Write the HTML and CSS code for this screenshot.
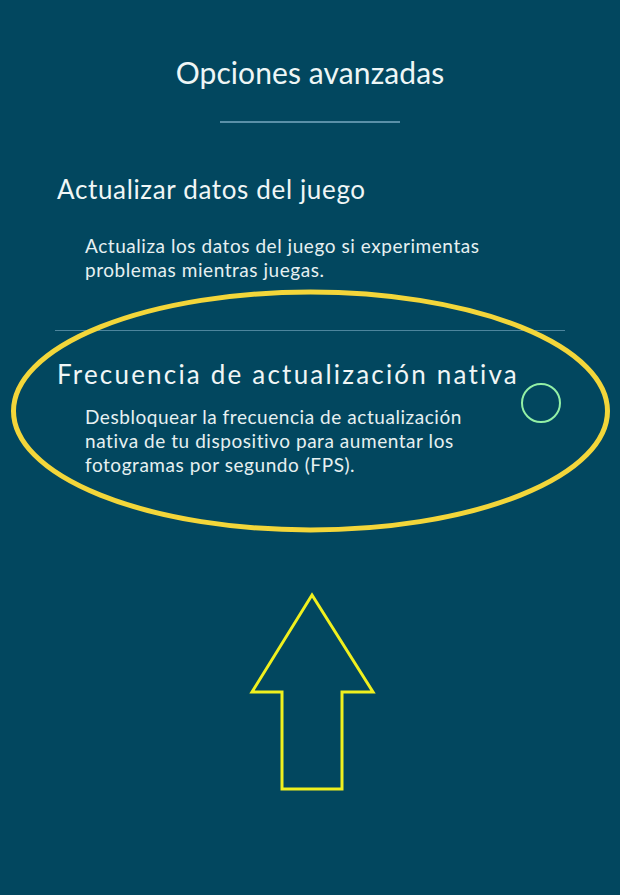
FILE: index.html
```html
<!DOCTYPE html>
<html lang="es">
<head>
<meta charset="utf-8">
<title>Opciones avanzadas</title>
<link rel="stylesheet" href="styles.css">
</head>
<body>
<main class="page">
  <h1 class="title">Opciones avanzadas</h1>
  <div class="title-rule"></div>

  <section class="option option-first">
    <h2 class="option-heading">Actualizar datos del juego</h2>
    <p class="option-desc">Actualiza los datos del juego si experimentas problemas mientras juegas.</p>
  </section>

  <div class="section-rule"></div>

  <section class="option option-toggle">
    <h2 class="option-heading spaced">Frecuencia de actualización nativa</h2>
    <span class="toggle" aria-hidden="true"></span>
    <p class="option-desc narrow">Desbloquear la frecuencia de actualización nativa de tu dispositivo para aumentar los fotogramas por segundo (FPS).</p>
  </section>

  <svg class="annotations" width="620" height="895" viewBox="0 0 620 895" aria-hidden="true">
    <ellipse cx="310.5" cy="411" rx="297" ry="119" fill="none" stroke="#f3d63a" stroke-width="5"/>
    <polygon points="312,595 373,692 342,692 342,789 282,789 282,692 252,692" fill="none" stroke="#f0f01e" stroke-width="3" stroke-linejoin="miter"/>
  </svg>
</main>
</body>
</html>
```

FILE: styles.css
```css
html, body {
  margin: 0;
  padding: 0;
}

body {
  background: #02475f;
  color: #eef6f5;
  font-family: Lato, "Open Sans", "Liberation Sans", sans-serif;
}

.page {
  position: relative;
  width: 620px;
  height: 895px;
  padding-top: 54px;
  box-sizing: border-box;
  overflow: hidden;
}

.title {
  margin: 0;
  font-size: 30px;
  line-height: 36px;
  font-weight: 400;
  text-align: center;
  letter-spacing: 0.1px;
  color: #eef6f6;
}

.title-rule {
  width: 180px;
  height: 2px;
  margin: 31px auto 0;
  background: #5a90a8;
}

.option {
  padding: 0 55px 0 57px;
}

.option-first {
  margin-top: 51px;
}

.option-heading {
  margin: 0;
  font-size: 26px;
  line-height: 30px;
  font-weight: 400;
  letter-spacing: 0.65px;
  color: #f0f6f6;
}

.option-heading.spaced {
  letter-spacing: 2.2px;
  white-space: nowrap;
}

.option-desc {
  max-width: 415px;
  margin: 30px 0 0 28px;
  font-size: 19px;
  line-height: 24px;
  letter-spacing: 0.55px;
  color: #e6f0f1;
}

.section-rule {
  height: 1px;
  margin: 48px 55px 0 55px;
  background: #4d859d;
}

.option-toggle {
  display: grid;
  grid-template-columns: 1fr auto;
  margin-top: 28px;
  padding-right: 0;
}

.option-toggle .option-heading {
  grid-column: 1 / 3;
  grid-row: 1;
}

.toggle {
  grid-column: 2;
  grid-row: 1 / 3;
  align-self: start;
  width: 36px;
  height: 36px;
  margin: 24px 59px 0 0;
  border: 2px solid #93f0a6;
  border-radius: 50%;
}

.option-desc.narrow {
  grid-column: 1;
  grid-row: 2;
  margin-top: 16px;
}

.annotations {
  position: absolute;
  left: 0;
  top: 0;
  pointer-events: none;
}
```
